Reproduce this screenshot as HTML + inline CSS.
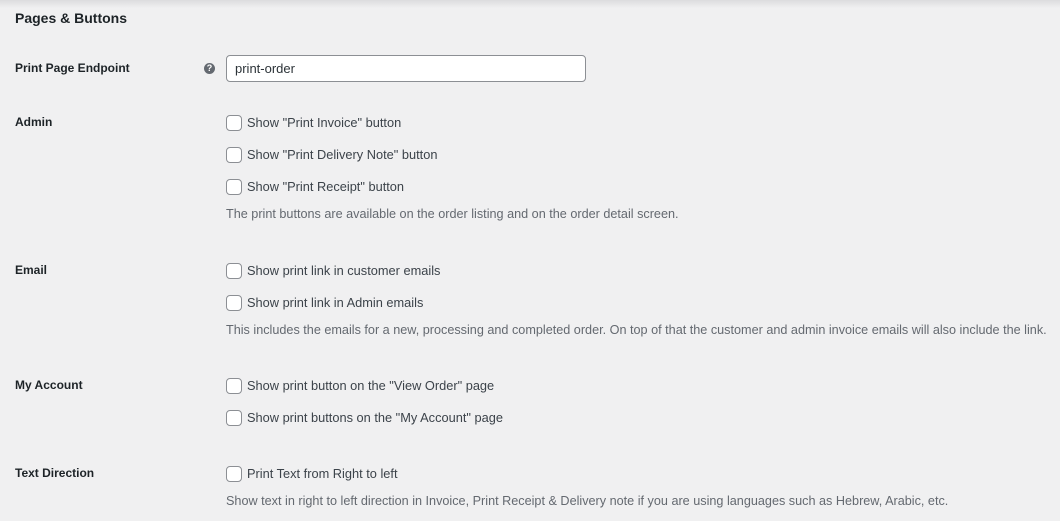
<!DOCTYPE html>
<html><head><meta charset="utf-8"><style>
body{margin:0;width:1060px;height:521px;background:#f0f0f1;font-family:"Liberation Sans",sans-serif;font-size:13px;color:#3c434a;position:relative;overflow:hidden}
.shadow{position:absolute;left:0;top:0;width:1060px;height:8px;background:linear-gradient(#dcdcde,#f0f0f1)}
.a{position:absolute;white-space:nowrap;line-height:16px}
h2{position:absolute;left:15px;top:9px;margin:0;font-size:14px;font-weight:600;color:#1d2327;line-height:18px}
.lbl{font-weight:bold;color:#1d2327;left:15px;font-size:12px}
.cb{position:absolute;left:226px;width:14px;height:14px;border:1px solid #8c8f94;border-radius:4px;background:#fff}
.ct{left:247px;color:#3c434a;font-size:12.8px}
.d{left:226px;color:#646970;font-size:12.65px}
.inp{position:absolute;left:226px;top:55px;width:358px;height:25px;border:1px solid #8c8f94;border-radius:4px;background:#fff;box-sizing:content-box}
.inp span{position:absolute;left:8px;top:5px;color:#2c3338}
.q{position:absolute;left:204px;top:63px;width:11px;height:11px;border-radius:50%;background:#646970;color:#fff;font-size:9px;font-weight:bold;text-align:center;line-height:11px}
</style></head><body>
<div class="shadow"></div>
<h2>Pages &amp; Buttons</h2>
<div class="a lbl" style="top:60px">Print Page Endpoint</div>
<div class="q">?</div>
<div class="inp"><span>print-order</span></div>

<div class="a lbl" style="top:114px">Admin</div>
<div class="cb" style="top:115px"></div><div class="a ct" style="top:115px">Show "Print Invoice" button</div>
<div class="cb" style="top:147px"></div><div class="a ct" style="top:147px">Show "Print Delivery Note" button</div>
<div class="cb" style="top:179px"></div><div class="a ct" style="top:179px">Show "Print Receipt" button</div>
<div class="a d" style="top:206px">The print buttons are available on the order listing and on the order detail screen.</div>

<div class="a lbl" style="top:262px">Email</div>
<div class="cb" style="top:263px"></div><div class="a ct" style="top:263px">Show print link in customer emails</div>
<div class="cb" style="top:295px"></div><div class="a ct" style="top:295px">Show print link in Admin emails</div>
<div class="a d" style="top:322px">This includes the emails for a new, processing and completed order. On top of that the customer and admin invoice emails will also include the link.</div>

<div class="a lbl" style="top:377px">My Account</div>
<div class="cb" style="top:378px"></div><div class="a ct" style="top:378px">Show print button on the "View Order" page</div>
<div class="cb" style="top:410px"></div><div class="a ct" style="top:410px">Show print buttons on the "My Account" page</div>

<div class="a lbl" style="top:465px">Text Direction</div>
<div class="cb" style="top:466px"></div><div class="a ct" style="top:466px">Print Text from Right to left</div>
<div class="a d" style="top:493px">Show text in right to left direction in Invoice, Print Receipt &amp; Delivery note if you are using languages such as Hebrew, Arabic, etc.</div>
</body></html>
